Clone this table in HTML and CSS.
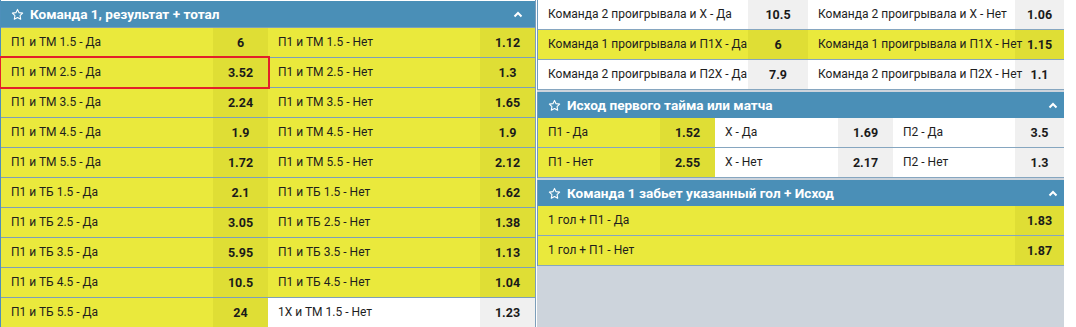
FILE: index.html
```html
<!DOCTYPE html>
<html lang="ru">
<head>
<meta charset="utf-8">
<title>Ставки</title>
<link rel="stylesheet" href="styles.css">
</head>
<body>
<div class="page">
  <section class="panel left">
    <div class="head">
      <svg class="star" viewBox="0 0 24 24"><path d="M12 2.6l2.9 6 6.6.9-4.8 4.6 1.2 6.6L12 17.5l-5.9 3.2 1.2-6.6-4.8-4.6 6.6-.9z"/></svg>
      <span class="title">Команда 1, результат + тотал</span>
      <svg class="chev" viewBox="0 0 10 7"><polyline points="1.5,5.5 5,2 8.5,5.5"/></svg>
    </div>
    <div class="row"><div class="bet bl yl"><span class="lbl">П1 и ТМ 1.5 - Да</span><span class="odd">6</span></div><div class="bet bl yl"><span class="lbl">П1 и ТМ 1.5 - Нет</span><span class="odd">1.12</span></div></div>
    <div class="row"><div class="bet bl yl sel"><span class="lbl">П1 и ТМ 2.5 - Да</span><span class="odd">3.52</span></div><div class="bet bl yl"><span class="lbl">П1 и ТМ 2.5 - Нет</span><span class="odd">1.3</span></div></div>
    <div class="row"><div class="bet bl yl"><span class="lbl">П1 и ТМ 3.5 - Да</span><span class="odd">2.24</span></div><div class="bet bl yl"><span class="lbl">П1 и ТМ 3.5 - Нет</span><span class="odd">1.65</span></div></div>
    <div class="row"><div class="bet bl yl"><span class="lbl">П1 и ТМ 4.5 - Да</span><span class="odd">1.9</span></div><div class="bet bl yl"><span class="lbl">П1 и ТМ 4.5 - Нет</span><span class="odd">1.9</span></div></div>
    <div class="row"><div class="bet bl yl"><span class="lbl">П1 и ТМ 5.5 - Да</span><span class="odd">1.72</span></div><div class="bet bl yl"><span class="lbl">П1 и ТМ 5.5 - Нет</span><span class="odd">2.12</span></div></div>
    <div class="row"><div class="bet bl yl"><span class="lbl">П1 и ТБ 1.5 - Да</span><span class="odd">2.1</span></div><div class="bet bl yl"><span class="lbl">П1 и ТБ 1.5 - Нет</span><span class="odd">1.62</span></div></div>
    <div class="row"><div class="bet bl yl"><span class="lbl">П1 и ТБ 2.5 - Да</span><span class="odd">3.05</span></div><div class="bet bl yl"><span class="lbl">П1 и ТБ 2.5 - Нет</span><span class="odd">1.38</span></div></div>
    <div class="row"><div class="bet bl yl"><span class="lbl">П1 и ТБ 3.5 - Да</span><span class="odd">5.95</span></div><div class="bet bl yl"><span class="lbl">П1 и ТБ 3.5 - Нет</span><span class="odd">1.13</span></div></div>
    <div class="row"><div class="bet bl yl"><span class="lbl">П1 и ТБ 4.5 - Да</span><span class="odd">10.5</span></div><div class="bet bl yl"><span class="lbl">П1 и ТБ 4.5 - Нет</span><span class="odd">1.04</span></div></div>
    <div class="row"><div class="bet bl yl"><span class="lbl">П1 и ТБ 5.5 - Да</span><span class="odd">24</span></div><div class="bet bl wh"><span class="lbl">1Х и ТМ 1.5 - Нет</span><span class="odd">1.23</span></div></div>
  </section>

  <div class="side">
    <div class="block">
      <div class="rrow"><div class="bet ba wh"><span class="lbl">Команда 2 проигрывала и Х - Да</span><span class="odd o60">10.5</span></div><div class="bet bb wh"><span class="lbl">Команда 2 проигрывала и Х - Нет</span><span class="odd o49">1.06</span></div></div>
      <div class="rrow"><div class="bet ba yl"><span class="lbl">Команда 1 проигрывала и П1Х - Да</span><span class="odd o60">6</span></div><div class="bet bb yl"><span class="lbl">Команда 1 проигрывала и П1Х - Нет</span><span class="odd o49">1.15</span></div></div>
      <div class="rrow"><div class="bet ba wh"><span class="lbl">Команда 2 проигрывала и П2Х - Да</span><span class="odd o60">7.9</span></div><div class="bet bb wh"><span class="lbl">Команда 2 проигрывала и П2Х - Нет</span><span class="odd o49">1.1</span></div></div>
    </div>

    <section class="panel block">
      <div class="head rhead">
        <svg class="star" viewBox="0 0 24 24"><path d="M12 2.6l2.9 6 6.6.9-4.8 4.6 1.2 6.6L12 17.5l-5.9 3.2 1.2-6.6-4.8-4.6 6.6-.9z"/></svg>
        <span class="title">Исход первого тайма или матча</span>
        <svg class="chev" viewBox="0 0 10 7"><polyline points="1.5,5.5 5,2 8.5,5.5"/></svg>
      </div>
      <div class="rrow"><div class="bet bc yl"><span class="lbl">П1 - Да</span><span class="odd">1.52</span></div><div class="bet bc2 wh"><span class="lbl">Х - Да</span><span class="odd">1.69</span></div><div class="bet bd wh"><span class="lbl">П2 - Да</span><span class="odd o49">3.5</span></div></div>
      <div class="rrow"><div class="bet bc yl"><span class="lbl">П1 - Нет</span><span class="odd">2.55</span></div><div class="bet bc2 wh"><span class="lbl">Х - Нет</span><span class="odd">2.17</span></div><div class="bet bd wh"><span class="lbl">П2 - Нет</span><span class="odd o49">1.3</span></div></div>
    </section>

    <section class="panel block">
      <div class="head rhead">
        <svg class="star" viewBox="0 0 24 24"><path d="M12 2.6l2.9 6 6.6.9-4.8 4.6 1.2 6.6L12 17.5l-5.9 3.2 1.2-6.6-4.8-4.6 6.6-.9z"/></svg>
        <span class="title">Команда 1 забьет указанный гол + Исход</span>
        <svg class="chev" viewBox="0 0 10 7"><polyline points="1.5,5.5 5,2 8.5,5.5"/></svg>
      </div>
      <div class="rrow"><div class="bet be yl"><span class="lbl">1 гол + П1 - Да</span><span class="odd o49">1.83</span></div></div>
      <div class="rrow"><div class="bet be yl"><span class="lbl">1 гол + П1 - Нет</span><span class="odd o49">1.87</span></div></div>
    </section>
  </div>
</div>
</body>
</html>
```

FILE: styles.css
```css
* { box-sizing: border-box; }
html, body {
  margin: 0;
  padding: 0;
  background: #ffffff;
  font-family: Roboto, "Liberation Sans", Arial, sans-serif;
  font-size: 12px;
  color: #1e1e1e;
}
.page {
  display: flex;
  align-items: flex-start;
  width: 1076px;
  height: 327px;
  overflow: hidden;
}
.left {
  width: 536px;
  border-left: 1px solid #4d8fba;
  border-right: 1px solid #7d9fba;
  padding-top: 1px;
}
.head {
  display: flex;
  align-items: center;
  height: 26px;
  background: #4a8fb7;
  color: #ffffff;
  padding: 0 12px 0 10px;
}
.rhead { padding-right: 6px; }
.star {
  width: 13px;
  height: 13px;
  flex: none;
  fill: none;
  stroke: #ffffff;
  stroke-width: 2;
  stroke-linejoin: round;
}
.title {
  flex: 1;
  margin-left: 6px;
  font-weight: 700;
  font-size: 13.6px;
}
.chev {
  width: 10px;
  height: 7px;
  flex: none;
  fill: none;
  stroke: #ffffff;
  stroke-width: 2;
}
.row {
  display: flex;
  border-top: 1px solid #7d9fba;
  height: 30px;
}
.side {
  width: 527px;
  margin-left: 1px;
  height: 327px;
  background: #cdd4dc;
  display: flex;
  flex-direction: column;
  gap: 2px;
}
.block {
  border-left: 1px solid #6f9bbd;
}
.rrow {
  display: flex;
  border-bottom: 1px solid #86a6c0;
  height: 30px;
}
.bet {
  display: flex;
  height: 29px;
  line-height: 29px;
}
.bl { width: 267px; }
.ba { width: 270px; }
.bb { width: 256px; }
.bc { width: 177px; }
.bc2 { width: 178px; }
.bd { width: 171px; }
.be { width: 526px; }
.lbl {
  flex: 1;
  min-width: 0;
  padding-left: 10px;
  font-size: 12px;
  white-space: nowrap;
  position: relative;
  z-index: 1;
}
.odd {
  width: 55px;
  flex: none;
  text-align: center;
  font-weight: 700;
  font-size: 12.5px;
  color: #1a1a1a;
}
.o60 { width: 60px; }
.o49 { width: 49px; }
.yl .lbl { background: #eae93c; }
.yl .odd { background: #dfde35; }
.wh .lbl { background: #ffffff; }
.wh .odd { background: #f0f0f0; }
.sel {
  position: relative;
  z-index: 2;
  outline: 2px solid #e3202a;
}
```
